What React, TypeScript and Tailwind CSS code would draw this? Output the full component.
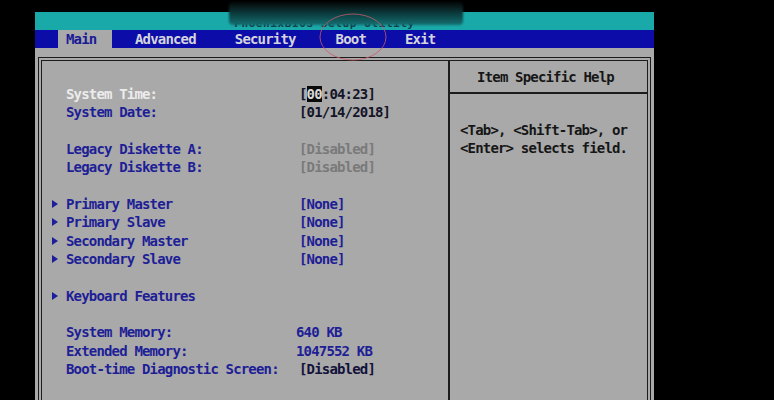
import type { ReactNode } from 'react';

type Row =
  | { gap: true }
  | { gap?: false; label: string; value?: ReactNode; arrow?: boolean; labelColor?: string; valueColor?: string; shift?: boolean };

const rows: Row[] = [
  {
    label: 'System Time:',
    labelColor: 'text-[#ececec]',
    valueColor: 'text-[#141428]',
    value: (
      <>
        [<span className="bg-[#0a0a0a] text-[#d8d8d8]">00</span>:04:23]
      </>
    ),
  },
  { label: 'System Date:', value: '[01/14/2018]', valueColor: 'text-[#141428]' },
  { gap: true },
  { label: 'Legacy Diskette A:', value: '[Disabled]', valueColor: 'text-[#7a7a7a]' },
  { label: 'Legacy Diskette B:', value: '[Disabled]', valueColor: 'text-[#7a7a7a]' },
  { gap: true },
  { label: 'Primary Master', value: '[None]', arrow: true },
  { label: 'Primary Slave', value: '[None]', arrow: true },
  { label: 'Secondary Master', value: '[None]', arrow: true },
  { label: 'Secondary Slave', value: '[None]', arrow: true },
  { gap: true },
  { label: 'Keyboard Features', arrow: true },
  { gap: true },
  { label: 'System Memory:', value: '640 KB', shift: true },
  { label: 'Extended Memory:', value: '1047552 KB', shift: true },
  { label: 'Boot-time Diagnostic Screen:', value: '[Disabled]', valueColor: 'text-[#12123a]' },
];

const tabs = [
  { name: 'Advanced', ml: 'ml-[23px]' },
  { name: 'Security', ml: 'ml-[39px]' },
  { name: 'Boot', ml: 'ml-[40px]' },
  { name: 'Exit', ml: 'ml-[39px]' },
];

function Arrow() {
  return (
    <svg width="6" height="8" viewBox="0 0 6 8" className="shrink-0">
      <path d="M0 0 L6 4 L0 8 Z" fill="#1e1e9a" />
    </svg>
  );
}

export default function App() {
  return (
    <div
      className="relative w-[774px] h-[400px] overflow-hidden bg-black text-[14px] leading-[18.33px] font-bold tracking-[-0.83px]"
      style={{ fontFamily: '"DejaVu Sans Mono", "Liberation Mono", monospace' }}
    >
      <div className="ml-[35px] mt-[12px] w-[619px] flex flex-col">
        {/* title band */}
        <div className="h-[18px] bg-[#1aa9a9] flex justify-center items-end pr-[40px] overflow-hidden">
          <span className="text-[#123a44] text-[11px] leading-[11px] tracking-[0.6px] pb-[1px]">PhoenixBIOS Setup Utility</span>
        </div>

        {/* menu bar */}
        <div className="h-[18px] bg-[#0c0ca8] flex items-center text-[#d4d4dc]">
          <div className="ml-[23px] w-[54px] h-full bg-[#a9a9a9] pl-[8px] flex items-center text-[#1a1a96]">Main</div>
          {tabs.map((t) => (
            <span key={t.name} className={t.ml}>
              {t.name}
            </span>
          ))}
        </div>

        {/* body */}
        <div className="bg-[#a9a9a9] h-[360px] pt-[9px] px-[3px]">
          <div className="h-full border-[4px] border-double border-b-0 border-[#1c1c1c] flex">
            <div className="w-[406px] pt-[24px] flex flex-col">
              {rows.map((r, i) =>
                r.gap ? (
                  <div key={i} className="h-[18.33px]" />
                ) : (
                  <div key={i} className="flex items-center h-[18.33px]">
                    <div className="w-[24px] pl-[10px] flex items-center">{r.arrow && <Arrow />}</div>
                    <span className={`w-[233px] ${r.labelColor ?? 'text-[#1e1e96]'}`}>{r.label}</span>
                    {r.value && (
                      <span className={`${r.shift ? '-ml-[3px]' : ''} ${r.valueColor ?? 'text-[#1e1e96]'}`}>{r.value}</span>
                    )}
                  </div>
                )
              )}
            </div>
            <div className="flex-1 border-l-2 border-[#1c1c1c] flex flex-col text-[#161616]">
              <div className="h-[33px] border-b-2 border-[#1c1c1c] flex items-center justify-center pt-[1px] pr-[6px]">
                Item Specific Help
              </div>
              <div className="pl-[10px] pt-[27px]">
                <div>&lt;Tab&gt;, &lt;Shift-Tab&gt;, or</div>
                <div>&lt;Enter&gt; selects field.</div>
              </div>
            </div>
          </div>
        </div>
      </div>

      {/* obscured title blob */}
      <div className="absolute left-[229px] top-[2px] w-[234px] h-[23px] rounded-[4px] bg-gradient-to-b from-[#050808] via-[#0b3c3e] to-[#147072] blur-[1px]" />

      {/* red marker circle around Boot */}
      <svg className="absolute left-0 top-0" width="774" height="400">
        <ellipse cx="353" cy="37" rx="33" ry="23" fill="none" stroke="#c85a6a" strokeWidth="1" opacity="0.8" />
      </svg>
    </div>
  );
}
